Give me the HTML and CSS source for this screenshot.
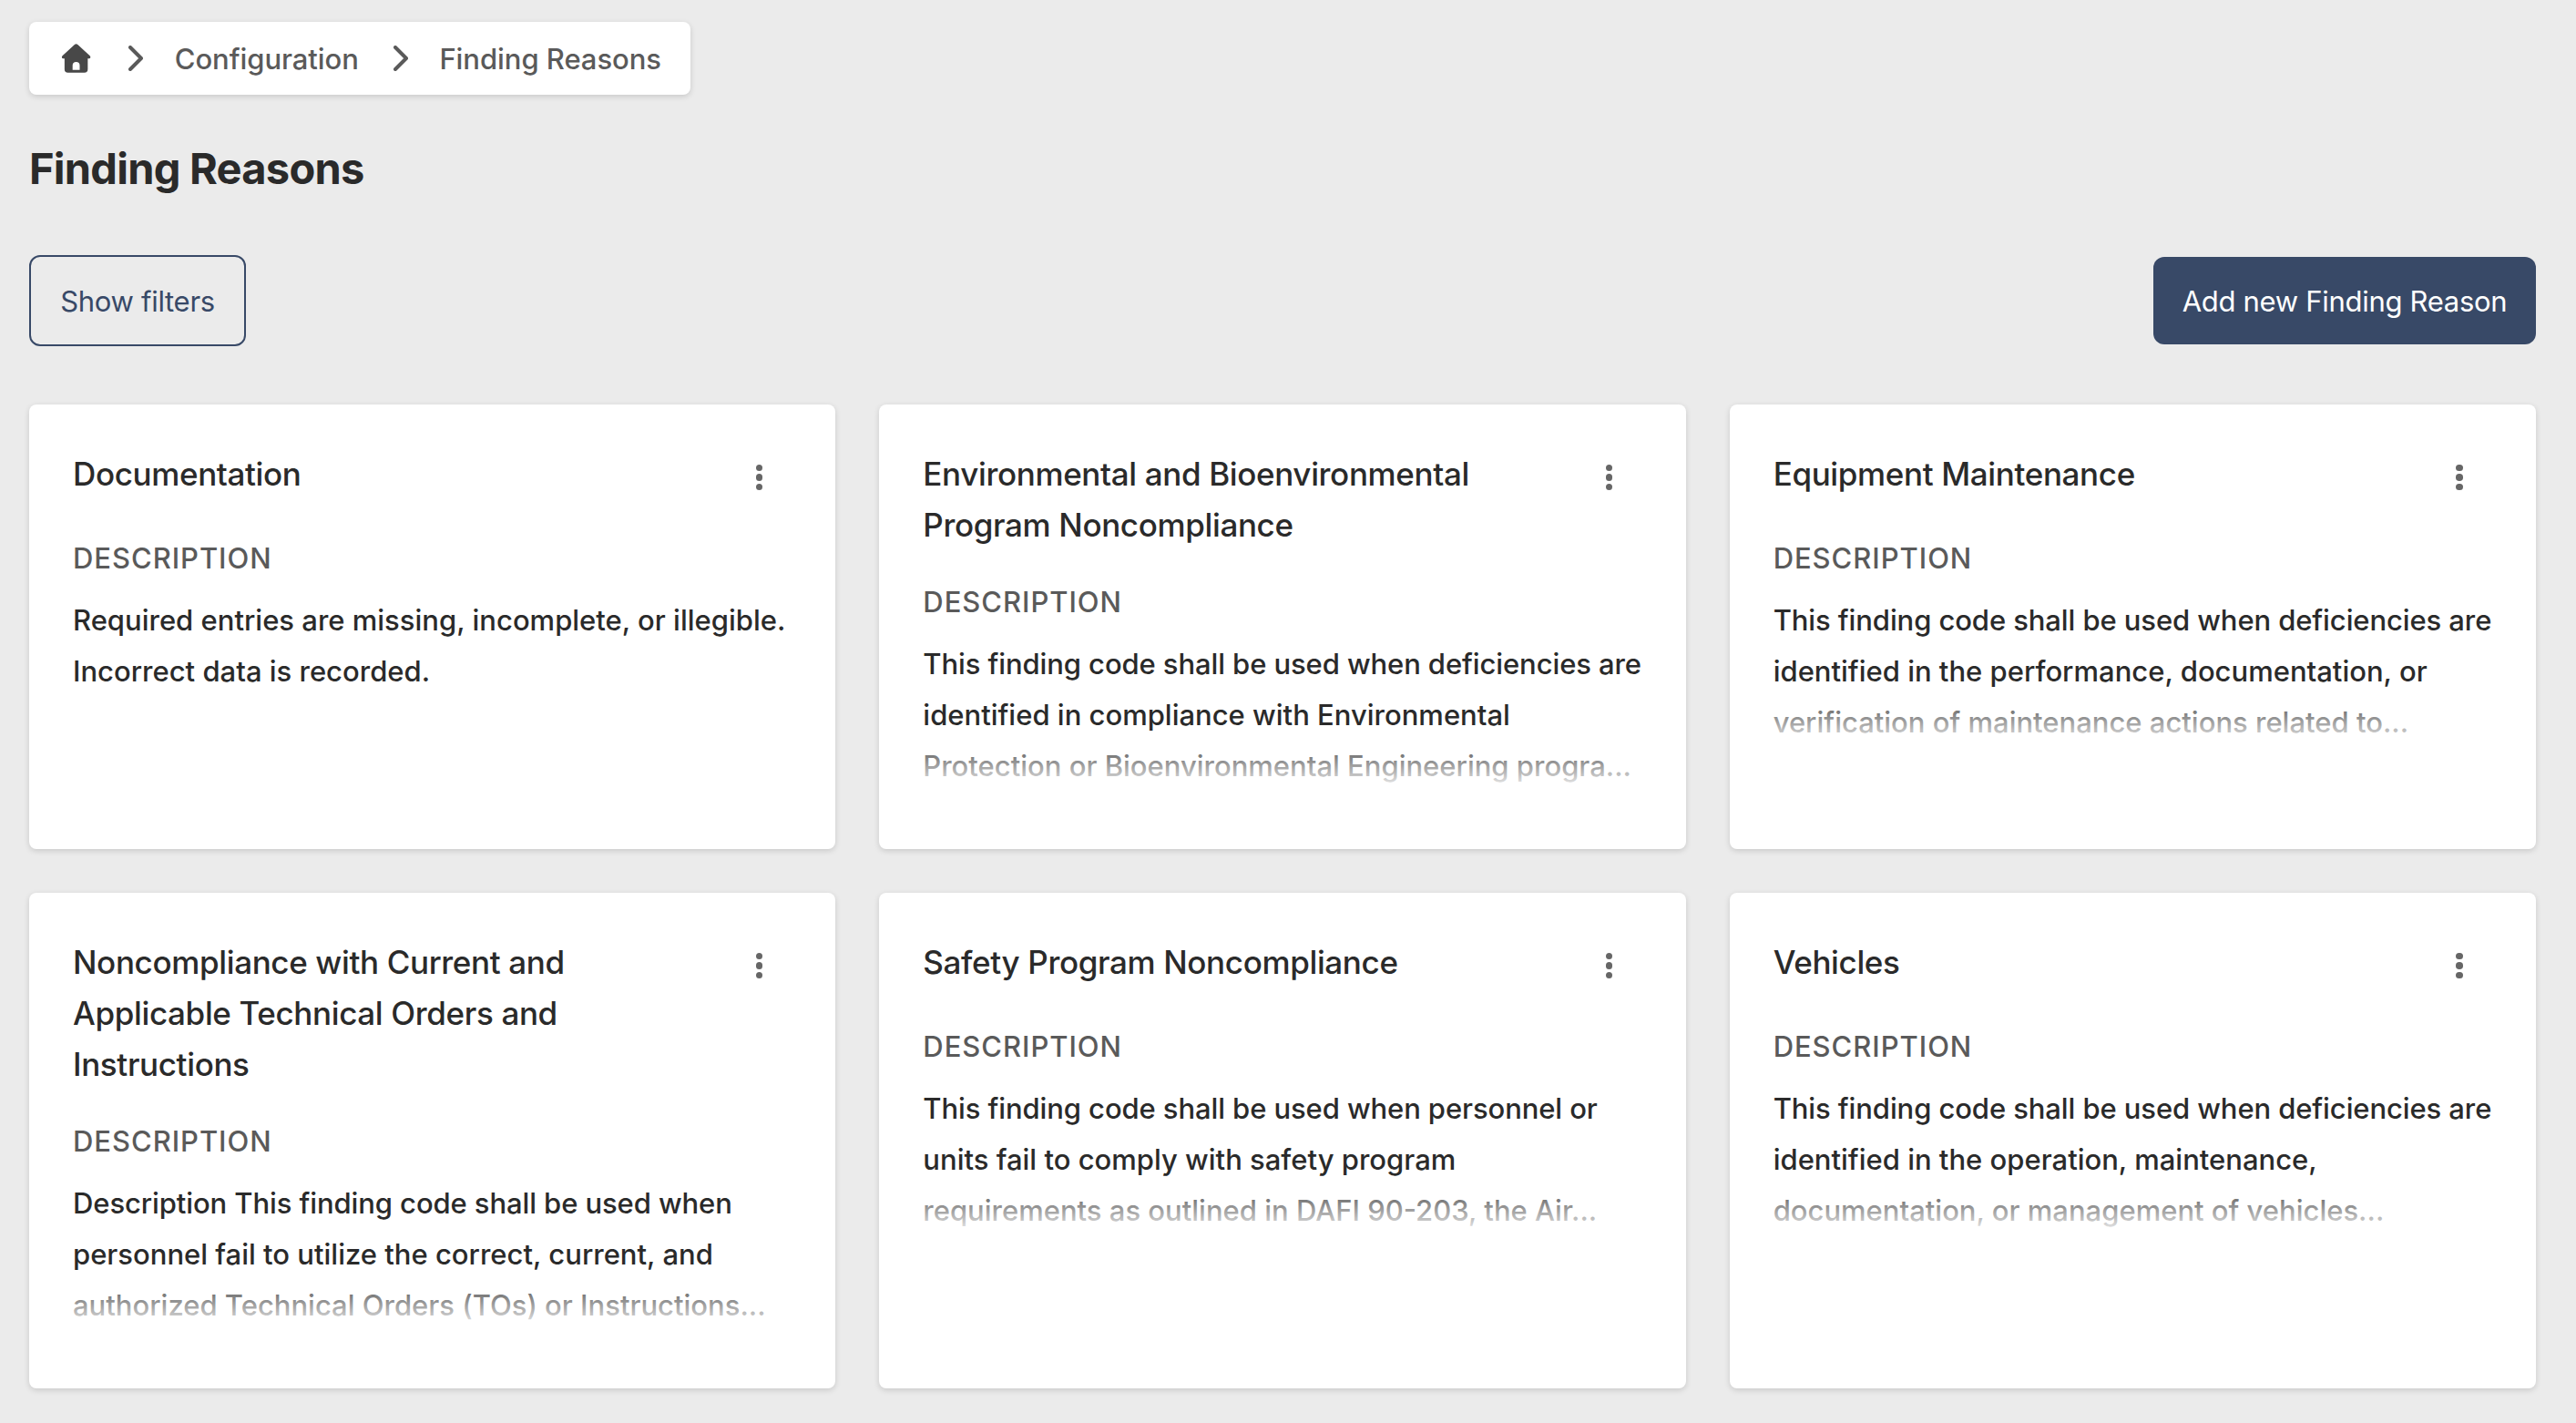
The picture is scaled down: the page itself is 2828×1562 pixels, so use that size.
FILE: index.html
```html
<!DOCTYPE html>
<html lang="en">
<head>
  <meta charset="UTF-8">
  <title>Finding Reasons</title>
  <link rel="stylesheet" href="styles.css">
</head>
<body>
  <nav class="breadcrumb">
    <svg class="home" viewBox="0 0 40 40"><path fill-rule="evenodd" d="M18.2 4.8a2.6 2.6 0 0 1 3.6 0L35.4 17.3c1.2 1.2.6 3-.9 3H33v11.900a3.800 3.800 0 0 1-3.800 3.800H10.800A3.800 3.800 0 0 1 7 32.200V20.300H5.500c-1.500 0-2.100-1.800-.9-3zM20 24a4 4 0 0 0-4 4v5h8v-5a4 4 0 0 0-4-4z"/></svg>
    <svg class="chevron" viewBox="0 0 16 28"><path d="M2 2l12 12L2 26"/></svg>
    <span>Configuration</span>
    <svg class="chevron" viewBox="0 0 16 28"><path d="M2 2l12 12L2 26"/></svg>
    <span>Finding Reasons</span>
  </nav>

  <h1>Finding Reasons</h1>

  <div class="toolbar">
    <button class="btn btn-outline">Show filters</button>
    <button class="btn btn-primary">Add new Finding Reason</button>
  </div>

  <main class="cards">
    <div class="card">
      <div class="card-header">
        <h2>Documentation</h2>
        <button class="menu"><i></i><i></i><i></i></button>
      </div>
      <div class="label">Description</div>
      <p class="text">Required entries are missing, incomplete, or illegible.<br>Incorrect data is recorded.</p>
    </div>

    <div class="card">
      <div class="card-header">
        <h2>Environmental and Bioenvironmental<br>Program Noncompliance</h2>
        <button class="menu"><i></i><i></i><i></i></button>
      </div>
      <div class="label">Description</div>
      <p class="text fade"><span class="tight">This finding code shall be used when deficiencies are</span><br>identified in compliance with Environmental<br>Protection or Bioenvironmental Engineering progra...</p>
    </div>

    <div class="card">
      <div class="card-header">
        <h2>Equipment Maintenance</h2>
        <button class="menu"><i></i><i></i><i></i></button>
      </div>
      <div class="label">Description</div>
      <p class="text fade"><span class="tight">This finding code shall be used when deficiencies are</span><br>identified in the performance, documentation, or<br>verification of maintenance actions related to...</p>
    </div>

    <div class="card">
      <div class="card-header">
        <h2>Noncompliance with Current and<br>Applicable Technical Orders and<br>Instructions</h2>
        <button class="menu"><i></i><i></i><i></i></button>
      </div>
      <div class="label">Description</div>
      <p class="text fade"><span class="tight">Description This finding code shall be used when</span><br>personnel fail to utilize the correct, current, and<br>authorized Technical Orders (TOs) or Instructions...</p>
    </div>

    <div class="card">
      <div class="card-header">
        <h2>Safety Program Noncompliance</h2>
        <button class="menu"><i></i><i></i><i></i></button>
      </div>
      <div class="label">Description</div>
      <p class="text fade"><span class="tight">This finding code shall be used when personnel or</span><br>units fail to comply with safety program<br>requirements as outlined in DAFI 90-203, the Air...</p>
    </div>

    <div class="card">
      <div class="card-header">
        <h2>Vehicles</h2>
        <button class="menu"><i></i><i></i><i></i></button>
      </div>
      <div class="label">Description</div>
      <p class="text fade"><span class="tight">This finding code shall be used when deficiencies are</span><br>identified in the operation, maintenance,<br>documentation, or management of vehicles...</p>
    </div>
  </main>
</body>
</html>
```
FILE: styles.css
```css
* {
  box-sizing: border-box;
}

body {
  margin: 0;
  padding: 24px 44px 38px 32px;
  background: #ebebeb;
  color: #2a2a2a;
  font-family: Inter, 'Open Sans', sans-serif;
  font-size: 31px;
}

.breadcrumb {
  display: flex;
  align-items: center;
  width: 726px;
  height: 80px;
  padding: 0 32px;
  background: #fff;
  border-radius: 8px;
  box-shadow: 0 2px 6px rgba(0, 0, 0, 0.15);
  color: #5a5a5a;
  font-weight: 500;
  letter-spacing: -0.05px;
  white-space: nowrap;
}

.home {
  width: 40px;
  height: 40px;
  fill: #484848;
}

.chevron {
  width: 16px;
  height: 28px;
  margin: 0 34.500px 0 38px;
  flex: none;
  fill: none;
  stroke: #5a5a5a;
  stroke-width: 4;
  stroke-linecap: round;
  stroke-linejoin: round;
}

h1 {
  margin: 53px 0 67px;
  font-size: 47px;
  line-height: 56px;
  font-weight: 700;
  letter-spacing: -0.75px;
}

.toolbar {
  display: flex;
  justify-content: space-between;
  align-items: center;
  margin-bottom: 64px;
}

.btn {
  height: 96px;
  padding: 0;
  border: none;
  border-radius: 12px;
  font-family: inherit;
  font-size: 31px;
  white-space: nowrap;
}

.btn-outline {
  width: 238px;
  height: 100px;
  border: 2px solid #384967;
  background: transparent;
  color: #384967;
  letter-spacing: -0.3px;
}

.btn-primary {
  width: 420px;
  background: #384967;
  color: #fff;
  letter-spacing: -0.3px;
}

.cards {
  display: grid;
  grid-template-columns: repeat(3, 1fr);
  gap: 48px;
}

.card {
  padding: 48px 48px 64px;
  background: #fff;
  border-radius: 8px;
  box-shadow: 0 2px 6px rgba(0, 0, 0, 0.15);
  white-space: nowrap;
}

.card-header {
  display: flex;
  justify-content: space-between;
  align-items: flex-start;
  min-height: 64px;
  margin-bottom: 32px;
}

h2 {
  margin: 0;
  font-size: 35px;
  line-height: 56px;
  font-weight: 500;
  letter-spacing: -0.36px;
}

.menu {
  display: flex;
  flex-direction: column;
  align-items: center;
  justify-content: center;
  gap: 3px;
  width: 72px;
  height: 64px;
  padding: 0;
  border: none;
  background: none;
}

.menu i {
  width: 7.5px;
  height: 7.5px;
  border-radius: 50%;
  background: #666;
}

.label {
  margin-bottom: 15px;
  line-height: 49px;
  color: #5a5a5a;
  font-weight: 450;
  letter-spacing: 0.95px;
  text-transform: uppercase;
}

.text {
  position: relative;
  margin: 0 0 -1px;
  padding-top: 1px;
  line-height: 56px;
  font-weight: 500;
}

.tight {
  letter-spacing: -0.1px;
}

/* fades out the last line of a truncated description */
.fade::after {
  content: '';
  position: absolute;
  left: 0;
  right: 0;
  bottom: 0;
  height: 64px;
  background: linear-gradient(rgba(255, 255, 255, 0), #fff);
}
```
